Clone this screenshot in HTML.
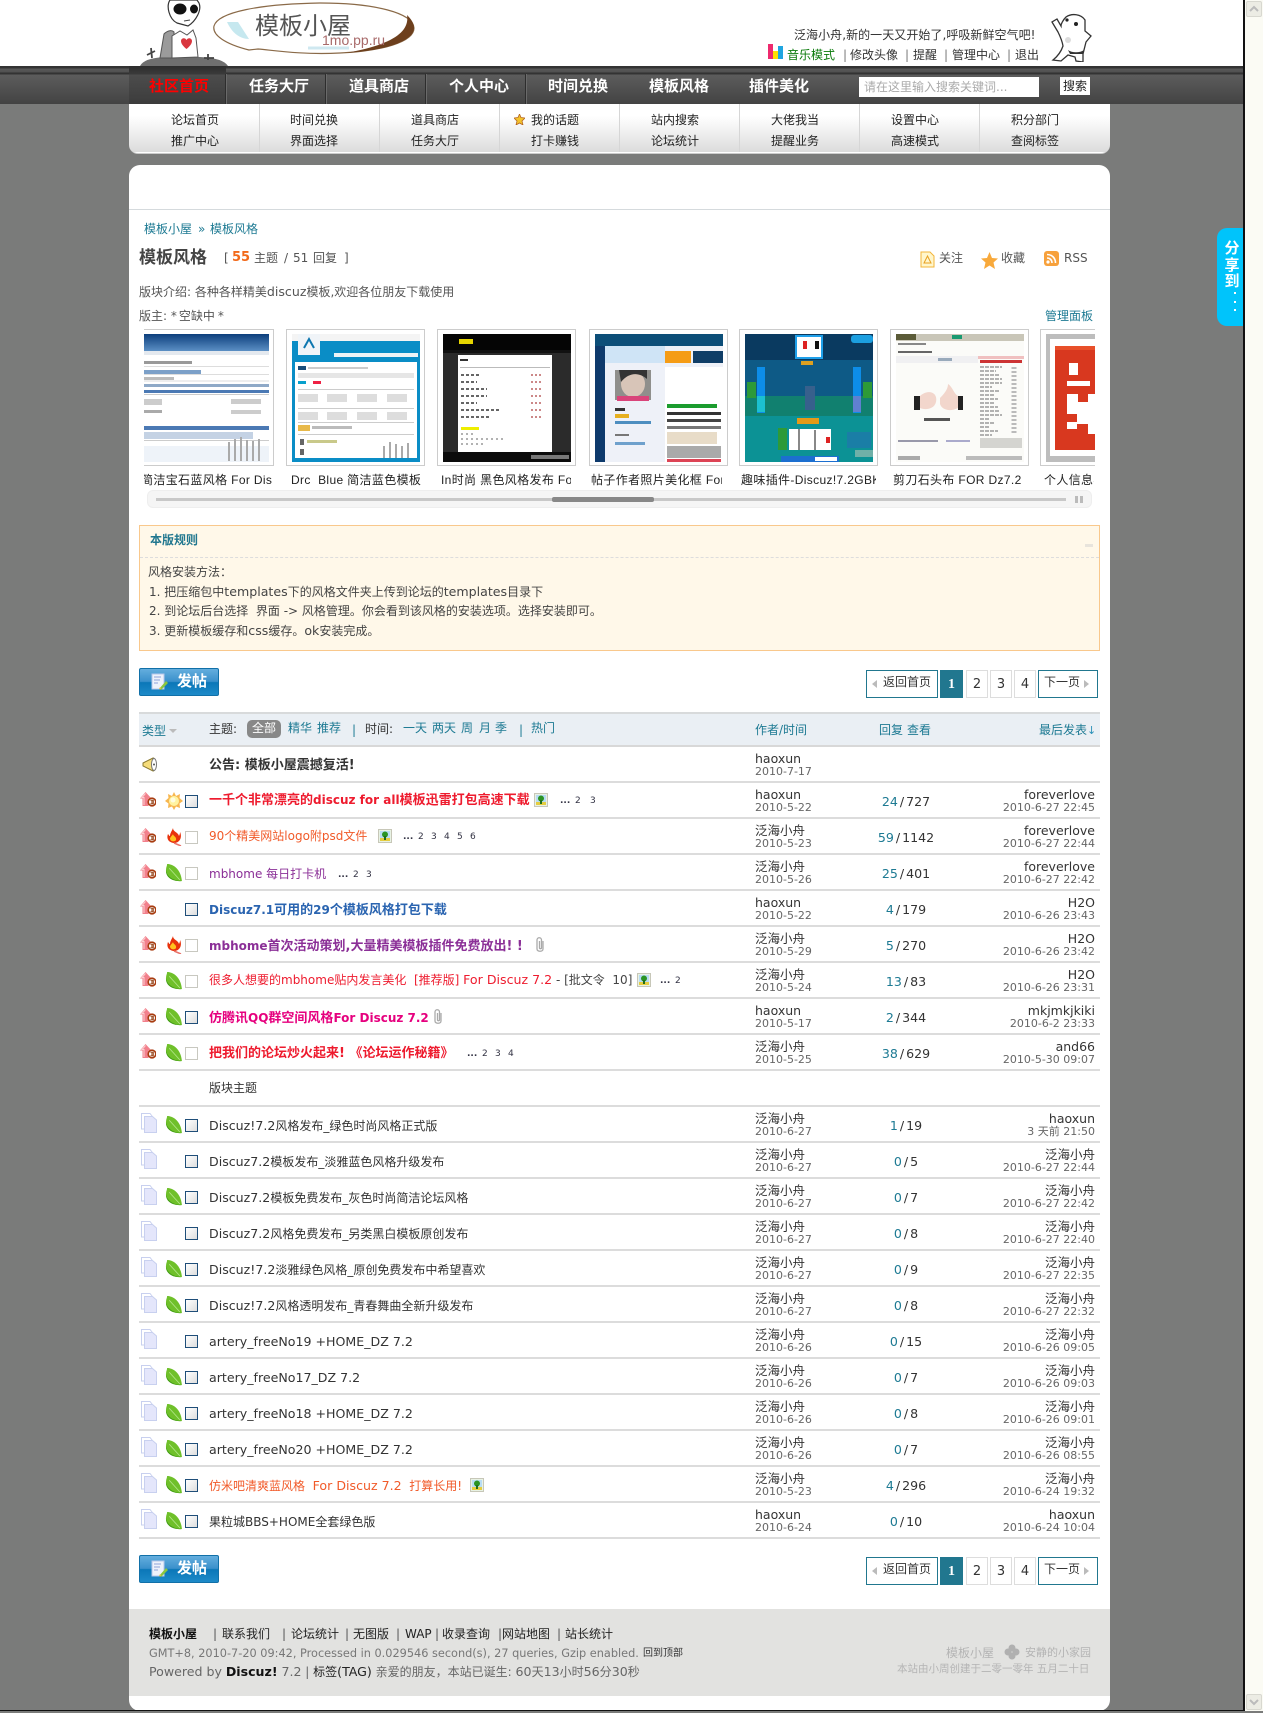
<!DOCTYPE html>
<html lang="zh"><head><meta charset="utf-8"><title>模板风格 - 模板小屋</title>
<style>
html,body{margin:0;padding:0;background:#7a7b7a}
body{position:relative;width:1263px;height:1711px;overflow:hidden;font:12px/16px "DejaVu Sans","WenQuanYi Zen Hei","Noto Sans CJK SC",sans-serif;color:#444}
div,span,a,svg{box-sizing:border-box}
.a{position:absolute;white-space:nowrap;line-height:16px}
.a i,.t i{font-style:normal;font-size:12.6px}
.lk{color:#1d7a93}
#sb{position:absolute;left:1245px;top:0;width:18px;height:1711px;background:#fbfbf4}
#bl{position:absolute;left:1243px;top:0;width:2px;height:1711px;background:#111}
#bb{position:absolute;left:0;top:1710px;width:1245px;height:1px;background:#111}
.sbb{position:absolute;left:1px;width:16px;height:16px;background:#ecece4;border:1px solid #d8d8d0;border-radius:2px}
#hd{position:absolute;left:0;top:0;width:1243px;height:66px;background:#fff}
#nav{position:absolute;left:0;top:66px;width:1243px;height:38px;background:linear-gradient(#333 0,#333 2px,#585858 3px,#505050 6px,#333 7px,#333 8px,#5c5c5c 9px,#434343 100%)}
#act{position:absolute;left:129px;top:0;width:97px;height:38px;background:linear-gradient(#2c2c2c,#3a3a3a 8px,#4c4c4c 9px,#3c3c3c)}
.sep{position:absolute;top:8px;width:2px;height:30px;background:linear-gradient(90deg,#2d2d2d 50%,#6a6a6a 50%)}
.tab{position:absolute;top:12px;font-size:15px;font-weight:bold;color:#fff;line-height:16px;white-space:nowrap}
#sub{position:absolute;left:129px;top:104px;width:981px;height:50px;background:linear-gradient(#fff 0,#fff 12px,#dcdcdc 48px,#fff 48px);border-radius:0 0 9px 9px;border-bottom:1px solid #ccc}
.sl{position:absolute;top:0;width:1px;height:48px;background:#d6d6d6}
#main{position:absolute;left:129px;top:165px;width:981px;height:1546px;background:#fff;border-radius:11px}
#ml{position:absolute;left:129px;top:209px;width:981px;height:1px;background:#d5dadd}
.box{position:absolute;top:329px;width:139px;height:137px;border:1px solid #ccc}
.th{position:absolute;top:334px;width:128px;height:128px;display:block}
.cap{position:absolute;top:472px;height:16px;line-height:16px;overflow:hidden;white-space:nowrap;color:#222;font-family:"Liberation Sans","WenQuanYi Zen Hei","Noto Sans CJK SC",sans-serif;letter-spacing:.35px}
#tbl{position:absolute;left:139px;top:712px;width:961px}
#th{height:35px;background:#eaeff4;border-top:2px solid #d8dadb;border-bottom:2px solid #d8d8d8;position:relative}
.r{position:relative;height:36px;border-bottom:2px solid #dcdcdc}
.r>*{position:absolute;white-space:nowrap;line-height:16px}
.r>svg{line-height:0}
.u{left:1px;top:9px;width:16px;height:15px}
.ic{left:26px;top:9px;width:18px;height:18px}
.dc{left:2px;top:6px;width:16px;height:20px}
.cb{left:46px;top:12px;width:13px;height:13px;background:linear-gradient(135deg,#fff,#ddd);border:1px solid #1f4e79}
.cl{background:#fff;border-color:#c8c8c0}
.t{left:70px;top:11px;color:#333}
.t2{top:9px}
.tb{font-size:13px;font-weight:bold}
.tb i{font-style:normal;font-size:12px}
.n{left:616px;top:4px;font-size:12.5px;color:#333}
.d{left:616px;top:18px;font-size:11px;color:#666;line-height:14px}
.c{left:727px;width:80px;text-align:center;top:11px;font-size:12.6px;color:#333;word-spacing:-2px}
.c b{font-weight:normal;color:#1d7a93}
.ln{right:5px;top:4px;font-size:12.5px;color:#333}
.ld{right:5px;top:18px;font-size:11px;color:#666;line-height:14px}
.pn{top:10px;font-size:9px;color:#334}
.im{top:10px;width:14px;height:14px}
.clp{top:10px;width:10px;height:16px}
.pg{position:absolute;height:28px;border:1px solid #ddd;background:#fff;text-align:center;line-height:28px;font-size:13px;color:#333}
.pb{border-color:#21778f;font-size:12px;line-height:22px}
.pa{background:#21778f;border-color:#21778f;color:#fff;font:bold 14px/28px "Liberation Serif",serif}
.post{position:absolute;left:139px;width:80px;height:28px;border:1px solid #1170a8;border-radius:2px;background:linear-gradient(#64aede 0,#3a90cb 48%,#0b77b8 52%,#1d8ac8 100%);color:#fff;font-size:15px;font-weight:bold;line-height:25px;padding-left:37px}
.post svg{position:absolute;left:11px;top:4px;width:18px;height:18px}
#ft{position:absolute;left:129px;top:1609px;width:981px;height:87px;background:#e2e2e0}
#rule{position:absolute;left:139px;top:525px;width:961px;height:126px;background:#fff8e9;border:1px solid #f9c88c}
#share{position:absolute;left:1217px;top:228px;width:26px;height:98px;background:#00c4fb;border-radius:10px 0 0 10px;color:#fff;font-size:15px;line-height:16.5px;text-align:center;padding:12px 0 0 4px;font-weight:bold}
#share s{position:absolute;left:17px;width:2px;height:2px;background:#fff}
</style></head><body>
<svg width="0" height="0" style="position:absolute">
<symbol id="up" viewBox="0 0 16 15"><path d="M5.5 0L11.500 6.500H8.500V14H2.500V6.500H0Z" fill="#f2808c"/><path d="M5.500 1.500L2 5.500H4V13" stroke="#fbd0d2" fill="none"/><circle cx="12" cy="10" r="3.800" fill="#fff" stroke="#a83c10" stroke-width="1.600"/><path d="M10.500 8.300H13.200V10H11M13.200 10V11.800H10.500" fill="none" stroke="#8a3000"/></symbol>
<symbol id="sun" viewBox="0 0 18 18"><path d="M9 0L11 4 15 2 14.500 6 18 9 14.500 11.500 15 16 11 14.500 9 18 7 14.500 3 16 3.500 11.500 0 9 3.500 6 3 2 7 4Z" fill="#f7b750"/><circle cx="9" cy="9" r="5" fill="#fff3a0"/><circle cx="8" cy="8" r="2.500" fill="#fffde0"/></symbol>
<symbol id="fire" viewBox="0 0 18 18"><path d="M8 0C8 4 13 4 14 8 15 6 15 5 15 4 17 8 16 14 10 15 4 15 1 11 3 6 4 7 4 8 5 8 5 5 7 3 8 0Z" fill="#e8320c"/><path d="M8 6C8 8 12 9 11 12 10 14 6 14 5 11 5 9 7 8 8 6Z" fill="#ffc21f"/><path d="M9 15L16 18" stroke="#e8736a" stroke-width="1.500"/></symbol>
<symbol id="leaf" viewBox="0 0 17 17"><path d="M2 0C8 0 15 5 16 16 8 17 0 13 1 5 1 3 2 2 2 0Z" fill="#6fc02a"/><path d="M1 6C2 12 8 16 16 16 8 17 0 13 1 5Z" fill="#3e9a14"/><path d="M4 4L14 15" stroke="#b4e58b" stroke-width=".8"/></symbol>
<symbol id="doc" viewBox="0 0 16 20"><path d="M.5.500H9L11 3V16H.500Z" fill="#fff" stroke="#c8d0ef"/><path d="M3.500 3.500H11.500L15.500 7V19.500H3.500Z" fill="#e4e6fb" stroke="#c8d0ef"/></symbol>
<symbol id="img" viewBox="0 0 14 14"><rect x=".5" y=".5" width="13" height="13" fill="#e8f2e4" stroke="#c7c7b8"/><rect x="2" y="2" width="10" height="7" fill="#b8dcf4"/><rect x="2" y="9" width="10" height="3" fill="#e5cd40"/><circle cx="7" cy="5.500" r="3" fill="#2a9424"/><rect x="6" y="7" width="2" height="4" fill="#1f6e1a"/></symbol>
<symbol id="clp" viewBox="0 0 10 16"><path d="M8 4V12C8 15 2 15 2 12V3C2 0 6.500 0 6.500 3V11C6.500 12 4.500 12 4.500 11V4" fill="none" stroke="#aaa" stroke-width="1.300"/></symbol>
<symbol id="pen" viewBox="0 0 18 18"><rect x="1" y="1" width="12" height="15" fill="#eef2fb" stroke="#b6c6ea"/><path d="M3 4H10M3 7H9M3 10H7" stroke="#8fa3d8"/><path d="M8 16L15 8 17 10 10 17Z" fill="#8bc63e"/><path d="M8 16L9 14 10.500 15.500Z" fill="#f6c04c"/></symbol>
</svg>

<div id="hd"></div>
<svg style="position:absolute;left:138px;top:0" width="290" height="66" viewBox="138 0 290 66">
<path d="M140 66Q144 58 165 57H200Q223 58 228 66Z" fill="#6f6f6f"/>
<path d="M147 55L155 51M151 48L152 58M204 58H214M208 54V60" stroke="#444" stroke-width="1.800" fill="none"/>
<path d="M160 58L164 34C168 30 172 30 174 32L174 58Z" fill="#9b9b9b" stroke="#555"/>
<path d="M172 58L172 36 180 31 187 35 193 30 196 38 198 57Z" fill="#fff" stroke="#555"/>
<path d="M186.500 40C188 37 192 38 192 41 192 44 189 47 186.500 49 184 47 181 44 181 41 181 38 185 37 186.500 40Z" fill="#d9363e"/>
<path d="M170 0C166 6 169 19 177 23L188 26C196 21 202 10 199 3L197 0Z" fill="#fff" stroke="#333" stroke-width="1.200"/>
<ellipse cx="180" cy="9" rx="6.500" ry="5.500" fill="#111"/><ellipse cx="194" cy="9" rx="4" ry="4.500" fill="#111"/>
<path d="M184 21L190 20" stroke="#444"/>
<path d="M249 50C225 44 212 35 214 26 218 12 260 4 320 3 375 3 413 13 414 28 414 42 382 51 340 53 300 55 272 50 258 49Z" fill="#fff" stroke="#8a6a48" stroke-width="1.200"/>
<path d="M345 53C382 51 414 42 414 28 414 23 411 19 407 15 410 32 392 45 345 53Z" fill="#6d3f1d"/>
<path d="M227 22H238L249 39C240 39 232 33 227 22Z" fill="#c6e8ef"/>
<path d="M308 48H349" stroke="#cfe8f0" stroke-width="3"/>
<text x="255" y="34" font-size="24" fill="#555" font-family="'WenQuanYi Zen Hei','Noto Sans CJK SC',sans-serif">模板小屋</text>
<text x="322" y="45" font-size="14" fill="#a86a6a" font-family="'Liberation Sans',sans-serif">1mo.pp.ru</text>
</svg>
<svg style="position:absolute;left:1048px;top:12px" width="44" height="50" viewBox="0 0 44 50">
<path d="M4 10L10 20C12 24 14 28 15 34 13 40 10 44 5 48L13 49 20 43 27 45 28 49 35 50 35 42 38 30 43 24 37 19 37 8C33 2 24 1 18 5 15 8 13 12 13 14L9 7Z" fill="#fff" stroke="#333" stroke-width="1.300"/>
<circle cx="19" cy="8" r="1.600" fill="#222"/><circle cx="28" cy="12" r="2" fill="#222"/><path d="M20 38C24 41 32 41 36 38L35 42 22 42Z" fill="#333"/><circle cx="20" cy="28" r="3" fill="#ddd"/>
</svg>
<span class="a" style="left:794px;top:27px;color:#333;letter-spacing:.05px">泛海小舟,新的一天又开始了,呼吸新鲜空气吧!</span>
<svg style="position:absolute;left:768px;top:44px" width="16" height="15"><rect width="5" height="15" fill="#ee2a6e"/><rect x="5" y="7" width="5" height="8" fill="#ffdf00"/><rect x="10" y="2" width="5" height="13" fill="#1fa5e0"/></svg>
<span class="a" style="left:787px;top:47px;color:#0a7a0a">音乐模式</span>
<span class="a" style="left:843px;top:47px;color:#777">|</span><span class="a" style="left:850px;top:47px;color:#333">修改头像</span>
<span class="a" style="left:905px;top:47px;color:#777">|</span><span class="a" style="left:913px;top:47px;color:#333">提醒</span>
<span class="a" style="left:944px;top:47px;color:#777">|</span><span class="a" style="left:952px;top:47px;color:#333">管理中心</span>
<span class="a" style="left:1007px;top:47px;color:#777">|</span><span class="a" style="left:1015px;top:47px;color:#333">退出</span>

<div id="nav"><div id="act"></div>
<div class="sep" style="left:225px"></div><div class="sep" style="left:325px"></div><div class="sep" style="left:425px"></div><div class="sep" style="left:525px"></div>
<span class="tab" style="left:149px;color:#f00">社区首页</span><span class="tab" style="left:249px">任务大厅</span><span class="tab" style="left:349px">道具商店</span><span class="tab" style="left:449px">个人中心</span><span class="tab" style="left:548px">时间兑换</span><span class="tab" style="left:649px">模板风格</span><span class="tab" style="left:749px">插件美化</span>
</div>
<div class="a" style="left:859px;top:77px;width:180px;height:20px;background:#fff;color:#aaa;padding:2px 5px">请在这里输入搜索关键词...</div>
<div class="a" style="left:1060px;top:77px;width:30px;height:18px;background:#fff;color:#222;text-align:center;padding-top:1px">搜索</div>

<div id="sub">
<div class="sl" style="left:130px"></div><div class="sl" style="left:250px"></div><div class="sl" style="left:370px"></div><div class="sl" style="left:490px"></div><div class="sl" style="left:610px"></div><div class="sl" style="left:730px"></div><div class="sl" style="left:850px"></div>
<span class="a" style="left:42px;top:8px;color:#222">论坛首页</span><span class="a" style="left:42px;top:29px;color:#222">推广中心</span>
<span class="a" style="left:161px;top:8px;color:#222">时间兑换</span><span class="a" style="left:161px;top:29px;color:#222">界面选择</span>
<span class="a" style="left:282px;top:8px;color:#222">道具商店</span><span class="a" style="left:282px;top:29px;color:#222">任务大厅</span>
<svg style="position:absolute;left:385px;top:10px" width="11" height="11" viewBox="0 0 11 11"><path d="M5.500 0L7 3.500 11 4 8 7 9 11 5.500 9 2 11 3 7 0 4 4 3.500Z" fill="#f3c32c" stroke="#b5651d" stroke-width=".8"/></svg>
<span class="a" style="left:402px;top:8px;color:#222">我的话题</span><span class="a" style="left:402px;top:29px;color:#222">打卡赚钱</span>
<span class="a" style="left:522px;top:8px;color:#222">站内搜索</span><span class="a" style="left:522px;top:29px;color:#222">论坛统计</span>
<span class="a" style="left:642px;top:8px;color:#222">大佬我当</span><span class="a" style="left:642px;top:29px;color:#222">提醒业务</span>
<span class="a" style="left:762px;top:8px;color:#222">设置中心</span><span class="a" style="left:762px;top:29px;color:#222">高速模式</span>
<span class="a" style="left:882px;top:8px;color:#222">积分部门</span><span class="a" style="left:882px;top:29px;color:#222">查阅标签</span>
</div>

<div id="main"></div><div id="ml"></div>
<span class="a lk" style="left:144px;top:221px">模板小屋</span><span class="a lk" style="left:198px;top:221px">»</span><span class="a lk" style="left:210px;top:221px">模板风格</span>
<span class="a" style="left:139px;top:250px;font-size:17px;font-weight:bold;color:#444">模板风格</span>
<span class="a" style="left:224px;top:250px;color:#555">[</span><b class="a" style="left:232px;top:250px;color:#f26a1b;font-size:13px">55</b><span class="a" style="left:254px;top:250px;color:#555">主题</span><span class="a" style="left:284px;top:250px;color:#555">/</span><span class="a" style="left:293px;top:250px;color:#555">51</span><span class="a" style="left:313px;top:250px;color:#555">回复</span><span class="a" style="left:344px;top:250px;color:#555">]</span>
<span class="a" style="left:139px;top:284px;color:#555">版块介绍: 各种各样精美<i>discuz</i>模板,欢迎各位朋友下载使用</span>
<span class="a" style="left:139px;top:308px;color:#555">版主: *<span style="margin-left:2px;margin-right:3px">空缺中</span>*</span>
<svg style="position:absolute;left:920px;top:251px" width="15" height="17" viewBox="0 0 15 17"><path d="M1 1H10L14 5V16H1Z" fill="#fff6cc" stroke="#f3b53a"/><path d="M7.500 5L11 12H4Z" fill="none" stroke="#e8a020"/></svg>
<span class="a" style="left:939px;top:250px;color:#555">关注</span>
<svg style="position:absolute;left:981px;top:252px" width="17" height="17" viewBox="0 0 17 17"><path d="M8.500 0L11 6 17 6.500 12.500 10.500 14 17 8.500 13.500 3 17 4.500 10.500 0 6.500 6 6Z" fill="#f8a93b"/></svg>
<span class="a" style="left:1001px;top:250px;color:#555">收藏</span>
<svg style="position:absolute;left:1044px;top:251px" width="15" height="15" viewBox="0 0 15 15"><rect width="15" height="15" rx="3" fill="#f7a13c"/><circle cx="4" cy="11" r="1.600" fill="#fff"/><path d="M3 7C6 7 8 9 8 12M3 3.500C8 3.500 11.500 7 11.500 12" stroke="#fff" stroke-width="1.600" fill="none"/></svg>
<span class="a" style="left:1064px;top:250px;color:#555">RSS</span>
<span class="a lk" style="left:1045px;top:308px">管理面板</span>

<div style="position:absolute;left:144px;top:320px;width:951px;height:170px;overflow:hidden">
<div style="position:absolute;left:-144px;top:-320px;width:1263px;height:500px">
<div class="box" style="left:135px"></div><div class="box" style="left:286px"></div><div class="box" style="left:437px"></div><div class="box" style="left:589px"></div><div class="box" style="left:739px"></div><div class="box" style="left:890px"></div><div class="box" style="left:1040px"></div>
<svg class="th" style="left:141px" viewBox="0 0 128 128"><rect width="128" height="128" fill="#fff"/><defs><linearGradient id="g1" x1="0" y1="0" x2="0" y2="1"><stop offset="0" stop-color="#0c3e7c"/><stop offset="1" stop-color="#5b8fc4"/></linearGradient></defs><rect width="128" height="17" fill="url(#g1)"/><rect y="17" width="128" height="4" fill="#e4e9ef"/><rect x="1" y="27" width="50" height="3" fill="#999"/><rect y="32" width="128" height="1" fill="#ddd"/><rect y="36" width="60" height="5" fill="#7ca0c8"/><rect y="40" width="128" height="1" fill="#ddd"/><rect x="3" y="43" width="30" height="5" fill="#bbb"/><rect y="46" width="128" height="2" fill="#eee"/><rect y="50" width="128" height="3" fill="#8fa9c7"/><rect y="56" width="128" height="3" fill="#4b79b4"/><rect y="60" width="128" height="1" fill="#ccc"/><rect x="1" y="65" width="20" height="6" fill="#ccc"/><rect x="90" y="65" width="30" height="5" fill="#ccc"/><rect x="1" y="76" width="20" height="3" fill="#aaa"/><rect x="90" y="76" width="30" height="4" fill="#ccc"/><rect y="92" width="128" height="4" fill="#4b79b4"/><rect x="2" y="98" width="110" height="7" fill="#c4d2e4"/><rect y="106" width="128" height="1" fill="#ccc"/><rect y="112" width="128" height="16" fill="#eef3f9"/><path d="M88 127V108M94 127V105M100 127V103M106 127V106M112 127V107M118 127V105" stroke="#aaa" stroke-width="2"/></svg>
<svg class="th" style="left:292px" viewBox="0 0 128 128"><rect width="128" height="128" fill="#0a8dc6"/><rect y="0" width="128" height="7" fill="#f4f4f4"/><rect x="6" y="0" width="22" height="21" fill="#f0f4f8"/><path d="M12 14L17 5 22 14" stroke="#0d77b0" fill="none" stroke-width="2"/><rect x="42" y="19" width="84" height="4" fill="#eef3f6"/><rect x="3" y="28" width="122" height="96" fill="#fff"/><rect x="6" y="32" width="8" height="4" fill="#1a4d7a"/><rect x="16" y="33" width="60" height="2" fill="#ccc"/><rect x="6" y="39" width="116" height="5" fill="#e6e6e6"/><rect x="6" y="47" width="8" height="3" fill="#08a0cc"/><rect x="21" y="47" width="8" height="3" fill="#e24"/><rect x="6" y="55" width="116" height="1" fill="#ccc"/><rect x="6" y="60" width="20" height="8" fill="#ddd"/><rect x="35" y="60" width="20" height="8" fill="#ddd"/><rect x="65" y="60" width="20" height="8" fill="#ddd"/><rect x="95" y="60" width="20" height="8" fill="#ddd"/><rect x="6" y="74" width="116" height="1" fill="#ccc"/><rect x="6" y="78" width="20" height="8" fill="#ddd"/><rect x="35" y="78" width="20" height="8" fill="#ddd"/><rect x="65" y="78" width="20" height="8" fill="#ddd"/><rect x="95" y="78" width="20" height="8" fill="#ddd"/><rect x="6" y="88" width="116" height="1" fill="#ccc"/><rect x="6" y="91" width="12" height="6" fill="#e8b94a"/><rect x="20" y="92" width="40" height="3" fill="#bbb"/><rect x="6" y="100" width="116" height="1" fill="#ccc"/><rect x="8" y="105" width="4" height="6" fill="#666"/><rect x="15" y="106" width="30" height="3" fill="#c9c98a"/><rect x="8" y="115" width="4" height="6" fill="#666"/><path d="M92 124V112M98 124V108M104 124V110M110 124V112M116 124V109" stroke="#aaa" stroke-width="2"/></svg>
<svg class="th" style="left:443px" viewBox="0 0 128 128"><rect width="128" height="128" fill="#111"/><rect width="128" height="16" fill="#050505"/><rect x="16" y="5" width="14" height="5" fill="#e6d500"/><rect y="19" width="128" height="109" fill="#2b2b2b"/><rect x="15" y="21" width="94" height="97" fill="#fff"/><rect x="17" y="25" width="8" height="2" fill="#333"/><rect x="17" y="33" width="90" height="1" fill="#bbb"/><path d="M18 41h18M18 48h16M18 55h26M18 62h26M18 69h16M18 76h40M18 83h30" stroke="#666" stroke-width="2" stroke-dasharray="3 2"/><path d="M88 41h12M88 48h12M88 55h12M88 62h12M88 69h12M88 76h12M88 83h12" stroke="#c88" stroke-width="2" stroke-dasharray="2 2"/><rect x="18" y="93" width="18" height="3" fill="#ee0"/><path d="M18 100h12M18 105h42M18 110h22" stroke="#999" stroke-width="1.500" stroke-dasharray="2 3"/><rect y="118" width="128" height="10" fill="#0c0c0c"/><rect x="88" y="121" width="38" height="4" fill="#777"/></svg>
<svg class="th" style="left:595px" viewBox="0 0 128 128"><rect width="128" height="128" fill="#0e3a6c"/><rect width="128" height="12" fill="#0c4e78"/><rect x="10" y="12" width="118" height="116" fill="#eef1f8"/><rect x="10" y="12" width="60" height="17" fill="#cfe4f6"/><rect x="70" y="17" width="26" height="12" fill="#f59c15"/><rect x="98" y="17" width="30" height="12" fill="#103e67"/><rect x="20" y="36" width="36" height="30" fill="#8f8f8c"/><ellipse cx="38" cy="50" rx="12" ry="13" fill="#d8c5b8"/><path d="M24 36H52V45C44 38 34 38 26 48Z" fill="#333"/><rect x="22" y="62" width="32" height="5" fill="#d9447a"/><rect x="20" y="74" width="10" height="3" fill="#333"/><rect x="20" y="80" width="14" height="4" fill="#e6b020"/><rect x="20" y="87" width="36" height="3" fill="#4d8ec0"/><rect x="20" y="100" width="14" height="2" fill="#777"/><rect x="20" y="108" width="30" height="3" fill="#6ea0cc"/><rect x="70" y="33" width="58" height="95" fill="#fff"/><rect x="72" y="70" width="50" height="4" fill="#1b9c2e"/><rect x="72" y="78" width="54" height="3" fill="#333"/><rect x="72" y="85" width="54" height="3" fill="#444"/><rect x="72" y="92" width="54" height="3" fill="#777"/><rect x="72" y="98" width="50" height="12" fill="#e8dcc8"/><rect x="72" y="112" width="54" height="12" fill="#aaa"/><rect x="72" y="125" width="54" height="3" fill="#d45"/></svg>
<svg class="th" style="left:745px" viewBox="0 0 128 128"><rect width="128" height="128" fill="#0a3a60"/><rect y="26" width="128" height="36" fill="#0e5a86"/><rect y="62" width="128" height="20" fill="#11806f"/><rect y="82" width="128" height="46" fill="#0c9295"/><rect x="50" y="1" width="28" height="24" fill="#1fa0ea"/><rect x="52" y="3" width="10" height="20" fill="#fff"/><rect x="62" y="3" width="14" height="20" fill="#fff"/><rect x="58" y="7" width="4" height="8" fill="#d22"/><rect x="70" y="7" width="4" height="8" fill="#111"/><rect x="106" y="1" width="22" height="8" rx="3" fill="#1c9fe0"/><rect x="56" y="27" width="12" height="4" fill="#dca020"/><rect x="12" y="33" width="8" height="46" fill="#0d8de8"/><rect x="108" y="33" width="8" height="46" fill="#0d8de8"/><rect x="2" y="48" width="9" height="16" fill="#2d9a38"/><rect x="118" y="48" width="9" height="16" fill="#2d9a38"/><rect x="12" y="62" width="8" height="16" fill="#1cc0d0"/><rect x="108" y="62" width="8" height="16" fill="#6080d0"/><rect x="60" y="52" width="10" height="24" fill="#37608c"/><rect x="52" y="84" width="22" height="6" fill="#e59a18"/><rect x="33" y="94" width="9" height="22" fill="#2d9a38"/><rect x="44" y="95" width="42" height="21" fill="#fff"/><path d="M54 95V116M70 96V116" stroke="#111"/><rect x="81" y="103" width="4" height="6" fill="#d22"/><rect x="102" y="98" width="24" height="16" fill="#1a7ea6"/><rect x="36" y="122" width="58" height="6" fill="#1c6fd0"/><rect x="70" y="123" width="22" height="4" fill="#fff"/><rect x="110" y="116" width="18" height="7" fill="#70b0a8"/></svg>
<svg class="th" style="left:896px" viewBox="0 0 128 128"><rect width="128" height="128" fill="#fbfbf8"/><rect width="128" height="7" fill="#c9c6b8"/><rect width="20" height="6" fill="#5b5b38"/><rect x="56" y="1" width="10" height="4" fill="#1a9a72"/><rect x="2" y="9" width="28" height="2" fill="#888"/><rect x="2" y="17" width="34" height="2" fill="#666"/><rect y="22" width="82" height="7" fill="#f0f0f2"/><rect x="42" y="24" width="14" height="3" fill="#9ab"/><rect x="82" y="22" width="46" height="3" fill="#f0c0c0"/><rect x="84" y="26" width="42" height="3" fill="#c33"/><path d="M84 33h22M84 37h16M84 41h20M84 45h22M84 49h22M84 53h12M84 57h20M84 61h14M84 65h18M84 69h14M84 73h18M84 77h20M84 81h22M84 85h10M84 89h14M84 93h10M84 97h18M84 101h12" stroke="#999" stroke-width="1.500" stroke-dasharray="4 1"/><path d="M118 33V101" stroke="#bbb" stroke-width="5" stroke-dasharray="2 2"/><rect x="18" y="62" width="6" height="14" fill="#222"/><path d="M24 62C32 55 42 58 40 68 38 76 28 76 24 74Z" fill="#f2d6cc"/><path d="M44 64C50 58 52 54 52 50 56 52 58 60 62 62V74C54 78 46 76 44 70Z" fill="#f2d6cc"/><rect x="62" y="62" width="5" height="14" fill="#222"/><rect x="28" y="84" width="26" height="3" fill="#555"/><rect x="2" y="106" width="40" height="2" fill="#99a"/><rect x="50" y="106" width="24" height="2" fill="#aac"/><rect x="84" y="104" width="42" height="10" fill="#d4d4d0"/><rect x="2" y="122" width="22" height="4" fill="#aaa"/><rect x="70" y="122" width="56" height="4" fill="#bbb"/></svg>
<svg class="th" style="left:1046px" viewBox="0 0 128 128"><rect width="128" height="128" fill="#bdbdbd"/><rect x="4" y="5" width="124" height="117" fill="#fff"/><rect x="9" y="12" width="119" height="104" fill="#d8381f"/><rect x="9" y="12" width="119" height="4" fill="#e8502a"/><rect x="23" y="29" width="9" height="12" fill="#fff"/><rect x="21" y="47" width="23" height="5" fill="#fff"/><rect x="21" y="60" width="11" height="20" fill="#fff"/><rect x="31" y="68" width="11" height="22" fill="#fff"/><rect x="21" y="88" width="10" height="7" fill="#fff"/><rect x="42" y="60" width="8" height="40" fill="#fff"/></svg>
<span class="cap" style="left:141px;width:131px">简洁宝石蓝风格 For Discuz</span>
<span class="cap" style="left:291px;width:132px">Drc&nbsp; Blue 简洁蓝色模板 For</span>
<span class="cap" style="left:441px;width:130px">In时尚 黑色风格发布 For Dz</span>
<span class="cap" style="left:591px;width:131px">帖子作者照片美化框 For Dz</span>
<span class="cap" style="left:741px;width:135px">趣味插件-Discuz!7.2GBK</span>
<span class="cap" style="left:893px;width:132px">剪刀石头布 FOR Dz7.2</span>
<span class="cap" style="left:1044px;width:50px">个人信息栏</span>
</div></div>
<div style="position:absolute;left:147px;top:490px;width:945px;height:18px;background:#f5f5f5;border:1px solid #eee;border-radius:6px"></div>
<div style="position:absolute;left:156px;top:498px;width:910px;height:3px;background:#c8c8c8"></div>
<div style="position:absolute;left:552px;top:497px;width:102px;height:5px;background:#888;border-radius:2px"></div>
<div style="position:absolute;left:1075px;top:496px;width:3px;height:7px;background:#bbb"></div><div style="position:absolute;left:1080px;top:496px;width:3px;height:7px;background:#bbb"></div>

<div id="rule">
<b class="a" style="left:10px;top:6px;color:#21778f">本版规则</b>
<div style="position:absolute;left:0;top:31px;width:959px;border-top:1px dashed #ddd"></div>
<div style="position:absolute;left:945px;top:18px;width:8px;height:3px;background:#e8e4dc"></div>
<span class="a" style="left:8px;top:38px;color:#444">风格安装方法：</span>
<span class="a" style="left:9px;top:58px;color:#444">1. 把压缩包中<i>templates</i>下的风格文件夹上传到论坛的<i>templates</i>目录下</span>
<span class="a" style="left:9px;top:77px;color:#444">2. 到论坛后台选择&nbsp; 界面 -&gt; 风格管理。你会看到该风格的安装选项。选择安装即可。</span>
<span class="a" style="left:9px;top:97px;color:#444">3. 更新模板缓存和<i>css</i>缓存。<i>ok</i>安装完成。</span>
</div>

<div class="post" style="top:668px"><svg><use href="#pen"/></svg>发帖</div>
<div class="pg pb" style="left:866px;top:670px;width:72px"><span style="position:absolute;left:5px;top:9px;border:4px solid transparent;border-right:5px solid #bbb;border-left:0"></span><span style="padding-left:10px">返回首页</span></div>
<div class="pg pa" style="left:940px;top:670px;width:23px">1</div>
<div class="pg" style="left:966px;top:670px;width:22px">2</div><div class="pg" style="left:990px;top:670px;width:22px">3</div><div class="pg" style="left:1014px;top:670px;width:22px">4</div>
<div class="pg pb" style="left:1038px;top:670px;width:60px"><span style="padding-right:12px">下一页</span><span style="position:absolute;right:8px;top:9px;border:4px solid transparent;border-left:5px solid #bbb;border-right:0"></span></div>

<div id="tbl">
<div id="th">
<span class="a lk" style="left:3px;top:9px">类型</span><span style="position:absolute;left:30px;top:15px;border:4px solid transparent;border-top:4px solid #bbb"></span>
<span class="a" style="left:70px;top:7px;color:#333">主题:</span>
<span class="a" style="left:108px;top:6px;width:34px;height:18px;background:#888;border-radius:5px;color:#fff;text-align:center;line-height:17px">全部</span>
<span class="a lk" style="left:149px;top:6px">精华</span><span class="a lk" style="left:178px;top:6px">推荐</span><span class="a lk" style="left:213px;top:8px">|</span>
<span class="a" style="left:226px;top:7px;color:#333">时间:</span>
<span class="a lk" style="left:264px;top:6px">一天</span><span class="a lk" style="left:293px;top:6px">两天</span><span class="a lk" style="left:322px;top:6px">周</span><span class="a lk" style="left:340px;top:6px">月</span><span class="a lk" style="left:356px;top:6px">季</span><span class="a lk" style="left:380px;top:8px">|</span><span class="a lk" style="left:392px;top:6px">热门</span>
<span class="a lk" style="left:616px;top:8px">作者/时间</span><span class="a lk" style="left:740px;top:8px">回复</span><span class="a lk" style="left:768px;top:8px">查看</span><span class="a lk" style="left:900px;top:8px">最后发表</span><span class="a" style="left:948px;top:9px;color:#2a90b8;font-size:11px">↓</span>
</div>
<div class="r"><svg style="left:3px;top:10px;width:17px;height:15px" viewBox="0 0 17 15"><path d="M1 6L11 1C14 0 15 14 11 14L1 9Z" fill="#f5dc7a" stroke="#8a7a30"/><ellipse cx="12" cy="7.500" rx="2.500" ry="6" fill="#fff" stroke="#777"/><circle cx="12" cy="7.500" r="1" fill="#555"/></svg><span class="t tb" style="color:#333">公告: 模板小屋震撼复活!</span><span class="n">haoxun</span><span class="d">2010-7-17</span></div>
<div class="r"><svg class="u"><use href="#up"/></svg><svg class="ic"><use href="#sun"/></svg><span class="cb"></span><span class="t t2 tb" style="color:#ee1b2e">一千个非常漂亮的<i>discuz for all</i>模板迅雷打包高速下载</span><svg class="im" style="left:395px"><use href="#img"/></svg><span class="pn" style="left:421px"><b>...</b></span><span class="pn" style="left:436px">2</span><span class="pn" style="left:451px">3</span><span class="n">haoxun</span><span class="d">2010-5-22</span><span class="c"><b>24</b> / 727</span><span class="ln">foreverlove</span><span class="ld">2010-6-27 22:45</span></div>
<div class="r"><svg class="u"><use href="#up"/></svg><svg class="ic"><use href="#fire"/></svg><span class="cb cl"></span><span class="t t2" style="color:#f15a29">90个精美网站logo附psd文件</span><svg class="im" style="left:239px"><use href="#img"/></svg><span class="pn" style="left:264px"><b>...</b></span><span class="pn" style="left:279px">2</span><span class="pn" style="left:292px">3</span><span class="pn" style="left:305px">4</span><span class="pn" style="left:318px">5</span><span class="pn" style="left:331px">6</span><span class="n">泛海小舟</span><span class="d">2010-5-23</span><span class="c"><b>59</b> / 1142</span><span class="ln">foreverlove</span><span class="ld">2010-6-27 22:44</span></div>
<div class="r"><svg class="u"><use href="#up"/></svg><svg class="ic"><use href="#leaf"/></svg><span class="cb cl"></span><span class="t" style="color:#8b2f97">mbhome 每日打卡机</span><span class="pn" style="left:199px;top:12px"><b>...</b></span><span class="pn" style="left:214px;top:12px">2</span><span class="pn" style="left:227px;top:12px">3</span><span class="n">泛海小舟</span><span class="d">2010-5-26</span><span class="c"><b>25</b> / 401</span><span class="ln">foreverlove</span><span class="ld">2010-6-27 22:42</span></div>
<div class="r"><svg class="u"><use href="#up"/></svg><span class="cb"></span><span class="t tb" style="color:#2a64b0"><i>Discuz7.1</i>可用的<i>29</i>个模板风格打包下载</span><span class="n">haoxun</span><span class="d">2010-5-22</span><span class="c"><b>4</b> / 179</span><span class="ln">H2O</span><span class="ld">2010-6-26 23:43</span></div>
<div class="r"><svg class="u"><use href="#up"/></svg><svg class="ic"><use href="#fire"/></svg><span class="cb cl"></span><span class="t tb" style="color:#8b2f97"><i>mbhome</i>首次活动策划,大量精美模板插件免费放出! !</span><svg class="clp" style="left:396px"><use href="#clp"/></svg><span class="n">泛海小舟</span><span class="d">2010-5-29</span><span class="c"><b>5</b> / 270</span><span class="ln">H2O</span><span class="ld">2010-6-26 23:42</span></div>
<div class="r"><svg class="u"><use href="#up"/></svg><svg class="ic"><use href="#leaf"/></svg><span class="cb cl"></span><span class="t t2" style="color:#ee1b2e">很多人想要的mbhome贴内发言美化&nbsp; [推荐版] <i>For Discuz 7.2</i> <span style="color:#444">- [批文令&nbsp; 10]</span></span><svg class="im" style="left:498px"><use href="#img"/></svg><span class="pn" style="left:521px"><b>...</b></span><span class="pn" style="left:536px">2</span><span class="n">泛海小舟</span><span class="d">2010-5-24</span><span class="c"><b>13</b> / 83</span><span class="ln">H2O</span><span class="ld">2010-6-26 23:31</span></div>
<div class="r"><svg class="u"><use href="#up"/></svg><svg class="ic"><use href="#leaf"/></svg><span class="cb"></span><span class="t tb" style="color:#e6007e">仿腾讯<i>QQ</i>群空间风格<i>For Discuz 7.2</i></span><svg class="clp" style="left:294px"><use href="#clp"/></svg><span class="n">haoxun</span><span class="d">2010-5-17</span><span class="c"><b>2</b> / 344</span><span class="ln">mkjmkjkiki</span><span class="ld">2010-6-2 23:33</span></div>
<div class="r"><svg class="u"><use href="#up"/></svg><svg class="ic"><use href="#leaf"/></svg><span class="cb cl"></span><span class="t tb" style="color:#ee1b2e">把我们的论坛炒火起来! 《论坛运作秘籍》</span><span class="pn" style="left:328px;top:11px"><b>...</b></span><span class="pn" style="left:343px;top:11px">2</span><span class="pn" style="left:356px;top:11px">3</span><span class="pn" style="left:369px;top:11px">4</span><span class="n">泛海小舟</span><span class="d">2010-5-25</span><span class="c"><b>38</b> / 629</span><span class="ln">and66</span><span class="ld">2010-5-30 09:07</span></div>
<div class="r"><span class="t" style="top:9px">版块主题</span></div>
<div class="r"><svg class="dc"><use href="#doc"/></svg><svg class="ic"><use href="#leaf"/></svg><span class="cb"></span><span class="t"><i>Discuz!7.2</i>风格发布_绿色时尚风格正式版</span><span class="n">泛海小舟</span><span class="d">2010-6-27</span><span class="c"><b>1</b> / 19</span><span class="ln">haoxun</span><span class="ld">3 天前 21:50</span></div>
<div class="r"><svg class="dc"><use href="#doc"/></svg><span class="cb"></span><span class="t"><i>Discuz7.2</i>模板发布_淡雅蓝色风格升级发布</span><span class="n">泛海小舟</span><span class="d">2010-6-27</span><span class="c"><b>0</b> / 5</span><span class="ln">泛海小舟</span><span class="ld">2010-6-27 22:44</span></div>
<div class="r"><svg class="dc"><use href="#doc"/></svg><svg class="ic"><use href="#leaf"/></svg><span class="cb"></span><span class="t"><i>Discuz7.2</i>模板免费发布_灰色时尚简洁论坛风格</span><span class="n">泛海小舟</span><span class="d">2010-6-27</span><span class="c"><b>0</b> / 7</span><span class="ln">泛海小舟</span><span class="ld">2010-6-27 22:42</span></div>
<div class="r"><svg class="dc"><use href="#doc"/></svg><span class="cb"></span><span class="t"><i>Discuz7.2</i>风格免费发布_另类黑白模板原创发布</span><span class="n">泛海小舟</span><span class="d">2010-6-27</span><span class="c"><b>0</b> / 8</span><span class="ln">泛海小舟</span><span class="ld">2010-6-27 22:40</span></div>
<div class="r"><svg class="dc"><use href="#doc"/></svg><svg class="ic"><use href="#leaf"/></svg><span class="cb"></span><span class="t"><i>Discuz!7.2</i>淡雅绿色风格_原创免费发布中希望喜欢</span><span class="n">泛海小舟</span><span class="d">2010-6-27</span><span class="c"><b>0</b> / 9</span><span class="ln">泛海小舟</span><span class="ld">2010-6-27 22:35</span></div>
<div class="r"><svg class="dc"><use href="#doc"/></svg><svg class="ic"><use href="#leaf"/></svg><span class="cb"></span><span class="t"><i>Discuz!7.2</i>风格透明发布_青春舞曲全新升级发布</span><span class="n">泛海小舟</span><span class="d">2010-6-27</span><span class="c"><b>0</b> / 8</span><span class="ln">泛海小舟</span><span class="ld">2010-6-27 22:32</span></div>
<div class="r"><svg class="dc"><use href="#doc"/></svg><span class="cb"></span><span class="t"><i>artery_freeNo19 +HOME_DZ 7.2</i></span><span class="n">泛海小舟</span><span class="d">2010-6-26</span><span class="c"><b>0</b> / 15</span><span class="ln">泛海小舟</span><span class="ld">2010-6-26 09:05</span></div>
<div class="r"><svg class="dc"><use href="#doc"/></svg><svg class="ic"><use href="#leaf"/></svg><span class="cb"></span><span class="t"><i>artery_freeNo17_DZ 7.2</i></span><span class="n">泛海小舟</span><span class="d">2010-6-26</span><span class="c"><b>0</b> / 7</span><span class="ln">泛海小舟</span><span class="ld">2010-6-26 09:03</span></div>
<div class="r"><svg class="dc"><use href="#doc"/></svg><svg class="ic"><use href="#leaf"/></svg><span class="cb"></span><span class="t"><i>artery_freeNo18 +HOME_DZ 7.2</i></span><span class="n">泛海小舟</span><span class="d">2010-6-26</span><span class="c"><b>0</b> / 8</span><span class="ln">泛海小舟</span><span class="ld">2010-6-26 09:01</span></div>
<div class="r"><svg class="dc"><use href="#doc"/></svg><svg class="ic"><use href="#leaf"/></svg><span class="cb"></span><span class="t"><i>artery_freeNo20 +HOME_DZ 7.2</i></span><span class="n">泛海小舟</span><span class="d">2010-6-26</span><span class="c"><b>0</b> / 7</span><span class="ln">泛海小舟</span><span class="ld">2010-6-26 08:55</span></div>
<div class="r"><svg class="dc"><use href="#doc"/></svg><svg class="ic"><use href="#leaf"/></svg><span class="cb"></span><span class="t" style="color:#f15a29">仿米吧清爽蓝风格&nbsp; <i>For Discuz 7.2</i>&nbsp; 打算长用!</span><svg class="im" style="left:331px;top:11px"><use href="#img"/></svg><span class="n">泛海小舟</span><span class="d">2010-5-23</span><span class="c"><b>4</b> / 296</span><span class="ln">泛海小舟</span><span class="ld">2010-6-24 19:32</span></div>
<div class="r"><svg class="dc"><use href="#doc"/></svg><svg class="ic"><use href="#leaf"/></svg><span class="cb"></span><span class="t">果粒城BBS+HOME全套绿色版</span><span class="n">haoxun</span><span class="d">2010-6-24</span><span class="c"><b>0</b> / 10</span><span class="ln">haoxun</span><span class="ld">2010-6-24 10:04</span></div>
</div>

<div class="post" style="top:1555px"><svg><use href="#pen"/></svg>发帖</div>
<div class="pg pb" style="left:866px;top:1557px;width:72px"><span style="position:absolute;left:5px;top:9px;border:4px solid transparent;border-right:5px solid #bbb;border-left:0"></span><span style="padding-left:10px">返回首页</span></div>
<div class="pg pa" style="left:940px;top:1557px;width:23px">1</div>
<div class="pg" style="left:966px;top:1557px;width:22px">2</div><div class="pg" style="left:990px;top:1557px;width:22px">3</div><div class="pg" style="left:1014px;top:1557px;width:22px">4</div>
<div class="pg pb" style="left:1038px;top:1557px;width:60px"><span style="padding-right:12px">下一页</span><span style="position:absolute;right:8px;top:9px;border:4px solid transparent;border-left:5px solid #bbb;border-right:0"></span></div>

<div id="ft">
<b class="a" style="left:20px;top:17px;color:#111">模板小屋</b>
<span class="a" style="left:84px;top:17px;color:#555">|</span><span class="a" style="left:93px;top:17px;color:#222">联系我们</span>
<span class="a" style="left:153px;top:17px;color:#555">|</span><span class="a" style="left:162px;top:17px;color:#222">论坛统计</span>
<span class="a" style="left:216px;top:17px;color:#555">|</span><span class="a" style="left:224px;top:17px;color:#222">无图版</span>
<span class="a" style="left:267px;top:17px;color:#555">|</span><span class="a" style="left:276px;top:17px;color:#222">WAP</span>
<span class="a" style="left:306px;top:17px;color:#555">|</span><span class="a" style="left:313px;top:17px;color:#222">收录查询</span>
<span class="a" style="left:369px;top:17px;color:#555">|</span><span class="a" style="left:373px;top:17px;color:#222">网站地图</span>
<span class="a" style="left:428px;top:17px;color:#555">|</span><span class="a" style="left:436px;top:17px;color:#222">站长统计</span>
<span class="a" style="left:20px;top:37px;font-size:11.3px;color:#777">GMT+8, 2010-7-20 09:42, Processed in 0.029546 second(s), 27 queries, Gzip enabled.</span>
<span class="a" style="left:514px;top:37px;font-size:10px;color:#333">回到顶部</span>
<span class="a" style="left:20px;top:55px;color:#666"><i>Powered by</i> <b style="color:#111;font-size:12.6px">Discuz!</b> <i>7.2</i> | <span style="color:#222">标签<i>(TAG)</i></span> 亲爱的朋友，本站已诞生: <i>60</i>天<i>13</i>小时<i>56</i>分<i>30</i>秒</span>
<span class="a" style="left:817px;top:36px;color:#b4b4b4">模板小屋</span>
<svg style="position:absolute;left:875px;top:35px" width="16" height="16" viewBox="0 0 16 16"><g fill="#b0b0b0"><circle cx="8" cy="4" r="3.500"/><circle cx="8" cy="12" r="3.500"/><circle cx="4" cy="8" r="3.500"/><circle cx="12" cy="8" r="3.500"/></g></svg>
<span class="a" style="left:896px;top:36px;color:#b4b4b4;font-size:11px">安静的小家园</span>
<span class="a" style="left:768px;top:52px;color:#b4b4b4;font-size:10.5px">本站由小周创建于二零一零年 五月二十日</span>
</div>

<div id="share">分<br>享<br>到<s style="top:64px"></s><s style="top:73px"></s><s style="top:81px"></s></div>
<div id="bb"></div><div id="bl"></div>
<div id="sb"><div class="sbb" style="top:1px"><svg width="14" height="14"><path d="M3 9L7 5 11 9" fill="none" stroke="#bbb" stroke-width="2"/></svg></div><div class="sbb" style="top:1694px"><svg width="14" height="14"><path d="M3 5L7 9 11 5" fill="none" stroke="#bbb" stroke-width="2"/></svg></div></div>
</body></html>
